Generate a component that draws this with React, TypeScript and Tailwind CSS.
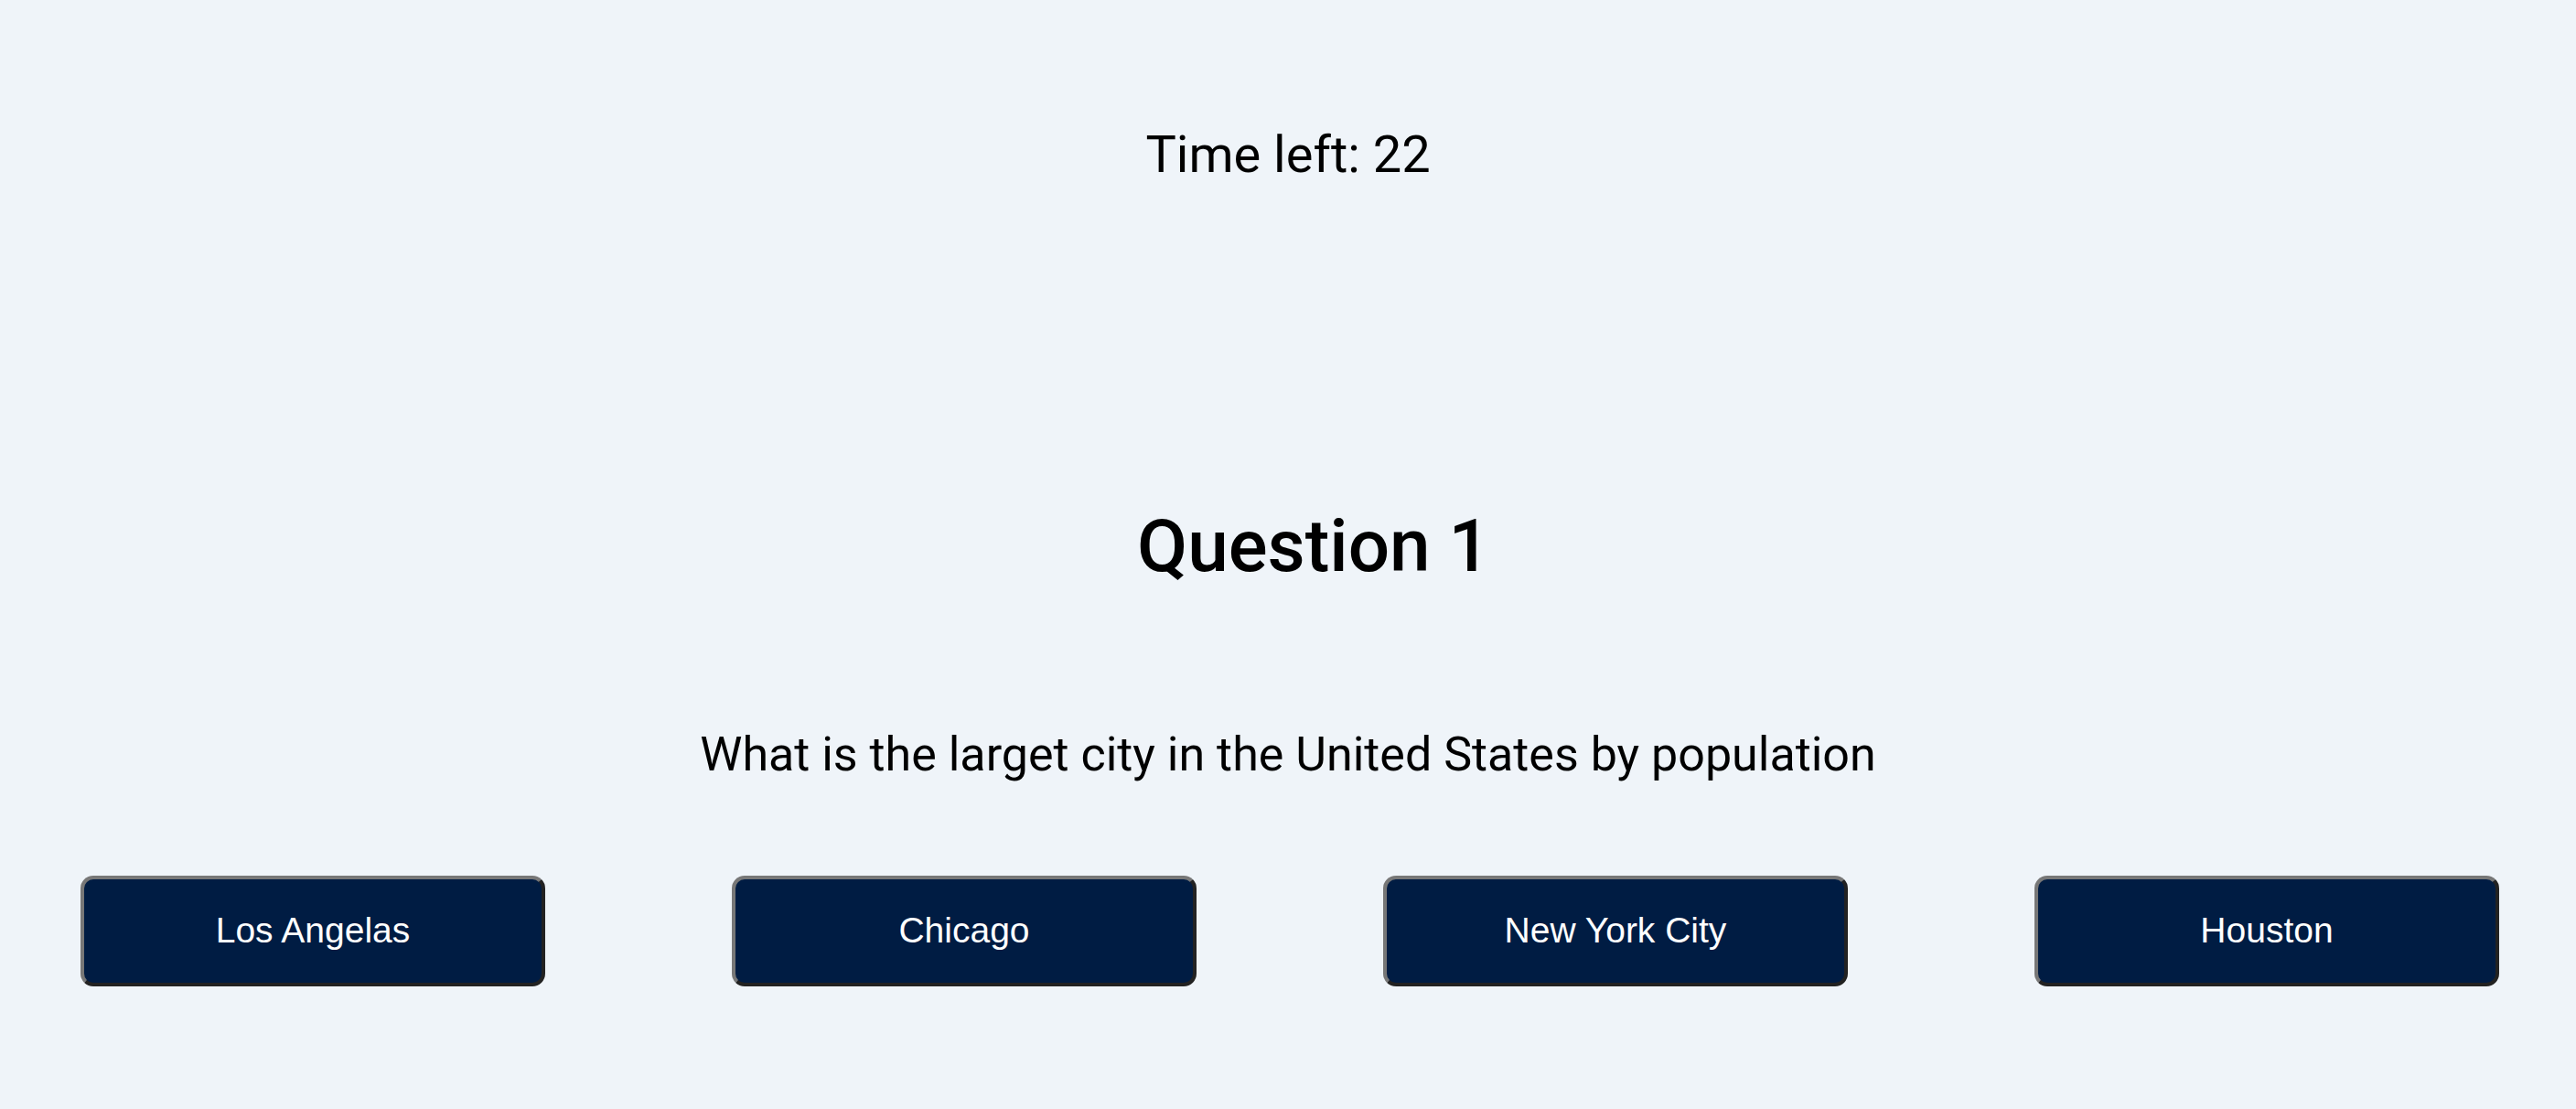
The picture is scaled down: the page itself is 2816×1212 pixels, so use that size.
import React, { useState } from 'react';

const choices = ['Los Angelas', 'Chicago', 'New York City', 'Houston'];

export default function App() {
  const [timeLeft] = useState(22);

  return (
    <div className="min-h-screen w-full bg-[#eff4f9] flex flex-col items-center text-black" style={{ fontFamily: 'Roboto, "Noto Sans", sans-serif' }}>
      <div className="mt-[141px] text-[56px] leading-none">Time left: {timeLeft}</div>

      <h1 className="mt-[360px] ml-[56px] text-[80px] leading-none font-medium">Question 1</h1>

      <p className="mt-[162px] text-[52px] leading-none">What is the larget city in the United States by population</p>

      <div className="mt-[106px] pl-[4px] flex justify-center gap-[204px] w-full">
        {choices.map((c) => (
          <button
            key={c}
            className="w-[508px] h-[121px] rounded-[14px] bg-[#001c43] text-white text-[39px] border-[4px] border-t-[#777] border-l-[#777] border-b-[#222] border-r-[#222]"
            style={{ fontFamily: '"Liberation Sans", Arial, sans-serif' }}
          >
            {c}
          </button>
        ))}
      </div>
    </div>
  );
}
